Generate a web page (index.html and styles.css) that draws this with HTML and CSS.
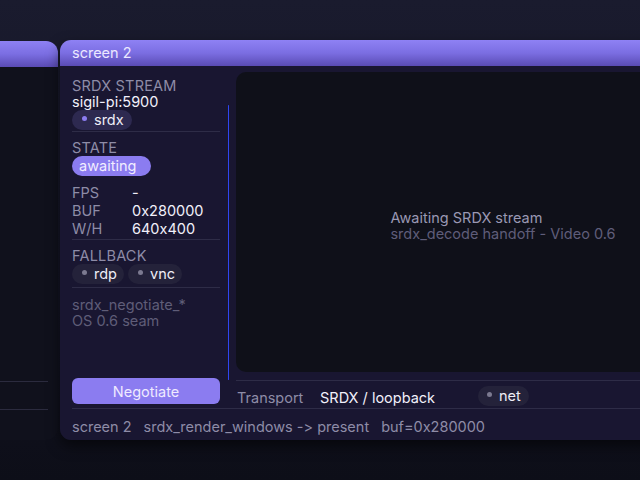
FILE: index.html
```html
<!DOCTYPE html>
<html>
<head>
<meta charset="utf-8">
<link rel="stylesheet" href="styles.css">
</head>
<body>
<div class="desktop">
  <div class="win win-back">
    <div class="titlebar"></div>
    <div class="back-body">
      <div class="back-row"></div>
      <div class="back-foot"></div>
    </div>
  </div>

  <div class="win win-main">
    <div class="titlebar"><span class="title">screen 2</span></div>
    <div class="body">
      <div class="cols">
        <div class="left">
          <div class="scroll">
            <div class="side">
              <div class="sec sec1">
                <div class="label">SRDX STREAM</div>
                <div class="value">sigil-pi:5900</div>
                <div class="chips"><span class="chip chip-accent"><span class="dot"></span>srdx</span></div>
              </div>
              <div class="sec sec2">
                <div class="label">STATE</div>
                <div class="chips"><span class="pill">awaiting</span></div>
                <div class="kv">
                  <span class="k">FPS</span><span class="v">-</span>
                  <span class="k">BUF</span><span class="v">0x280000</span>
                  <span class="k">W/H</span><span class="v">640x400</span>
                </div>
              </div>
              <div class="sec sec3">
                <div class="label">FALLBACK</div>
                <div class="chips">
                  <span class="chip"><span class="dot"></span>rdp</span>
                  <span class="chip"><span class="dot"></span>vnc</span>
                </div>
              </div>
              <div class="sec sec4">
                <div class="note">srdx_negotiate_*</div>
                <div class="note">OS 0.6 seam</div>
              </div>
            </div>
            <div class="track"><div class="thumb"></div></div>
          </div>
          <button class="btn">Negotiate</button>
        </div>
        <div class="right">
          <div class="video">
            <div class="msg">
              <div class="msg-title">Awaiting SRDX stream</div>
              <div class="msg-sub">srdx_decode handoff - Video 0.6</div>
            </div>
          </div>
          <div class="transport">
            <span class="t-label">Transport</span>
            <span class="t-value">SRDX / loopback</span>
            <span class="chip"><span class="dot"></span>net</span>
          </div>
        </div>
      </div>
      <div class="status">
        <span>screen 2</span>
        <span>srdx_render_windows -&gt; present</span>
        <span>buf=0x280000</span>
      </div>
    </div>
  </div>
</div>
</body>
</html>
```
FILE: styles.css
```css
* { box-sizing: border-box; }
html, body { margin: 0; padding: 0; }
body {
  width: 640px;
  height: 480px;
  overflow: hidden;
  font-family: Inter, "Noto Sans", sans-serif;
  font-size: 14.5px;
  line-height: 16px;
  font-feature-settings: "calt" 0, "liga" 0;
  color: #ecebf6;
  background: linear-gradient(180deg, #1a1b2e 0%, #151627 40%, #0d0e18 100%);
}
.desktop {
  position: relative;
  width: 640px;
  height: 480px;
  overflow: hidden;
}
.win {
  position: absolute;
  display: flex;
  flex-direction: column;
  border-radius: 12px;
  overflow: hidden;
}
.titlebar {
  height: 26px;
  flex: none;
  background: linear-gradient(180deg, #8e81f4 0%, #7b6ee2 50%, #5a4bb4 100%);
  display: flex;
  align-items: center;
  padding-left: 12px;
}
.title { color: #ebe8ff; }

.win-back {
  left: -300px;
  top: 41px;
  width: 358px;
  height: 399px;
}
.back-body {
  flex: 1;
  display: flex;
  flex-direction: column;
  justify-content: flex-end;
  padding: 0 10px 0 12px;
  background: #10111c;
}
.back-row { height: 28px; border-top: 1px solid #2b2b3e; }
.back-foot { height: 31px; border-top: 1px solid #2b2b3e; }

.win-main {
  left: 60px;
  top: 40px;
  width: 724px;
  height: 400px;
  border-radius: 11px;
  box-shadow: 0 6px 14px rgba(0, 0, 0, 0.55);
}
.body {
  flex: 1;
  background: #191631;
  display: flex;
  flex-direction: column;
}
.cols {
  flex: 1;
  display: flex;
  gap: 7px;
  padding: 6px 8px 0 12px;
}
.left {
  width: 157px;
  display: flex;
  flex-direction: column;
}
.scroll {
  flex: 1;
  display: flex;
}
.side {
  width: 148px;
  padding-top: 6px;
}
.track {
  width: 1px;
  margin-left: 8px;
  padding-top: 33px;
  display: flex;
  flex-direction: column;
}
.thumb {
  flex: 1;
  margin-bottom: -2px;
  background: #2f46f2;
  border-radius: 1px;
}
.sec { border-bottom: 1px solid #2e2c47; }
.sec1 { padding-bottom: 1px; }
.sec2 { padding-top: 8px; padding-bottom: 1px; }
.sec3 { padding-top: 8px; padding-bottom: 3px; }
.sec4 { border-bottom: none; padding-top: 9px; }
.label { color: #8e8ca7; letter-spacing: 0.2px; }
.value { color: #f1f0fa; }
.chips { display: flex; gap: 4px; }
.chip {
  display: inline-flex;
  align-items: center;
  height: 20px;
  padding: 0 7px 0 10px;
  border-radius: 10px;
  background: #24223a;
  color: #eeedf7;
  line-height: 20px;
}
.chip .dot {
  width: 5px;
  height: 5px;
  border-radius: 50%;
  background: #7c7a90;
  margin-right: 7px;
  margin-top: -3px;
}
.chip-accent { background: #2d2950; padding-right: 8px; }
.chip-accent .dot { background: #8b7cf0; }
.pill {
  display: inline-block;
  height: 20px;
  line-height: 20px;
  padding: 0 15px 0 7px;
  border-radius: 10px;
  background: #8b7cf0;
  color: #f1edff;
}
.kv {
  display: grid;
  grid-template-columns: 60px 1fr;
  line-height: 18px;
  padding-top: 8px;
}
.k { color: #8e8ca7; }
.v { color: #f1f0fa; }
.note { color: #5f5d78; }

.btn {
  width: 148px;
  height: 26px;
  margin-bottom: 4px;
  border: none;
  border-radius: 6px;
  background: #8b7cf0;
  color: #eeeaff;
  font-family: inherit;
  font-size: inherit;
  font-feature-settings: inherit;
  padding: 0;
}

.right {
  flex: 1;
  display: flex;
  flex-direction: column;
}
.video {
  height: 300px;
  background: #0f1019;
  border-radius: 10px;
  display: flex;
  align-items: center;
  justify-content: center;
  padding-top: 7px;
  padding-right: 6px;
}
.msg-title { color: #9a98b3; }
.msg-sub { color: #5f5d79; }
.transport {
  margin-top: 8px;
  border-top: 1px solid #2e2c47;
  height: 28px;
  padding-top: 5px;
  display: flex;
  align-items: flex-start;
}
.t-label { width: 84px; color: #8e8ca7; line-height: 24px; padding-left: 1px; }
.t-value { width: 158px; color: #f1f0fa; line-height: 24px; }
.transport .chip { padding-left: 9px; padding-right: 8px; }

.status {
  height: 32px;
  margin: 0 0 0 12px;
  border-top: 1px solid #2e2c47;
  padding-top: 10px;
  display: flex;
  gap: 12px;
  color: #8e8ca7;
}
```
